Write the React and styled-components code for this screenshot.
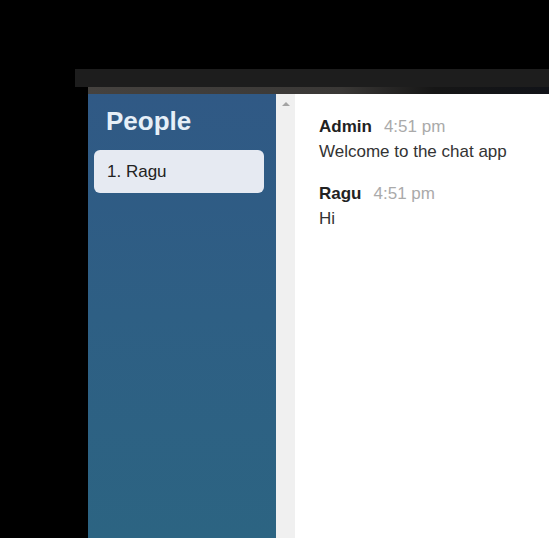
import React from 'react';
import styled, { createGlobalStyle } from 'styled-components';

const GlobalStyle = createGlobalStyle`
  html, body {
    margin: 0;
    padding: 0;
    background: #000;
    overflow: hidden;
  }
  body {
    font-family: "Liberation Sans", Arial, sans-serif;
  }
`;

const people = ['Ragu'];

const messages = [
  { from: 'Admin', at: '4:51 pm', text: 'Welcome to the chat app' },
  { from: 'Ragu', at: '4:51 pm', text: 'Hi' },
];

function App() {
  return (
    <>
      <GlobalStyle />
      <Screen>
        <Window>
          <TitleBar />
          <Frame>
            <TabStrip />
            <Layout>
              <Sidebar>
                <Heading>People</Heading>
                <PeopleList>
                  {people.map((name, i) => (
                    <Person key={name}>{i + 1}. {name}</Person>
                  ))}
                </PeopleList>
              </Sidebar>
              <Scrollbar>
                <Arrow />
              </Scrollbar>
              <Chat>
                {messages.map((m, i) => (
                  <Message key={i}>
                    <MessageHead>
                      <Author>{m.from}</Author>
                      <Time>{m.at}</Time>
                    </MessageHead>
                    <Body>{m.text}</Body>
                  </Message>
                ))}
              </Chat>
            </Layout>
          </Frame>
        </Window>
      </Screen>
    </>
  );
}

const Screen = styled.div`
  width: 549px;
  height: 538px;
  padding: 69px 0 0 75px;
  box-sizing: border-box;
  background: #000;
  overflow: hidden;
`;

const Window = styled.div`
  display: flex;
  flex-direction: column;
  height: 100%;
`;

const TitleBar = styled.div`
  height: 18px;
  background: #1d1d1d;
`;

const Frame = styled.div`
  margin-left: 13px;
  display: flex;
  flex-direction: column;
  flex: 1;
`;

const TabStrip = styled.div`
  height: 7px;
  background: linear-gradient(to right, #45423f 0%, #3a3836 55%, #161616 75%, #111318 100%);
`;

const Layout = styled.div`
  flex: 1;
  display: flex;
`;

const Sidebar = styled.div`
  width: 188px;
  flex-shrink: 0;
  background: linear-gradient(to bottom, #305985 0%, #2e5f84 50%, #2c6482 100%);
  padding: 12px 12px 0 6px;
  box-sizing: border-box;
`;

const Heading = styled.h2`
  margin: 0 0 14px 12px;
  font-size: 26px;
  font-weight: bold;
  color: #e6eff8;
  line-height: 30px;
`;

const PeopleList = styled.ol`
  list-style: none;
  margin: 0;
  padding: 0;
`;

const Person = styled.li`
  background: #e6eaf2;
  border-radius: 6px;
  height: 43px;
  display: flex;
  align-items: center;
  padding-left: 13px;
  font-size: 17px;
  color: #222;
`;

const Scrollbar = styled.div`
  width: 19px;
  flex-shrink: 0;
  background: #f0f0f0;
  display: flex;
  justify-content: center;
  padding-top: 8px;
  box-sizing: border-box;
`;

const Arrow = styled.div`
  width: 0;
  height: 0;
  border-left: 4px solid transparent;
  border-right: 4px solid transparent;
  border-bottom: 4px solid #a3a3a3;
`;

const Chat = styled.div`
  flex: 1;
  background: #fff;
  padding: 23px 24px 0;
  box-sizing: border-box;
`;

const Message = styled.div`
  margin-bottom: 22px;
`;

const MessageHead = styled.div`
  display: flex;
  align-items: baseline;
  gap: 12px;
  line-height: 20px;
  margin-bottom: 5px;
`;

const Author = styled.span`
  font-size: 17px;
  font-weight: bold;
  color: #222;
`;

const Time = styled.span`
  font-size: 17px;
  color: #aaa;
`;

const Body = styled.p`
  margin: 0;
  font-size: 17px;
  line-height: 20px;
  color: #333;
`;

export default App;
